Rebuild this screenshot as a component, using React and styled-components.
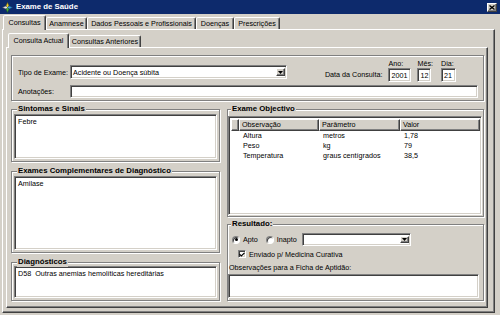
import React from 'react'
import styled, { createGlobalStyle } from 'styled-components'

const FACE = '#d4d0c8'
const SHADOW = '#808080'
const DARK = '#404040'

const GlobalStyle = createGlobalStyle`
  html, body {
    margin: 0;
    padding: 0;
    background: ${FACE};
  }
  body {
    font-family: "Liberation Sans", Arial, sans-serif;
  }
  * {
    box-sizing: border-box;
  }
`

const Window = styled.div`
  width: 500px;
  height: 315px;
  background: ${FACE};
  display: flex;
  flex-direction: column;
  overflow: hidden;
  font-size: 7.2px;
  color: #000;
`
const TitleBar = styled.div`
  height: 14px;
  flex-shrink: 0;
  background: #0d2a6c;
  display: flex;
  align-items: center;
  gap: 3px;
  padding: 0 3px 0 2px;
`
const Caption = styled.span`
  flex: 1;
  color: #fff;
  font-weight: bold;
  font-size: 7.8px;
  line-height: 14px;
`
const CloseBtn = styled.div`
  width: 10px;
  height: 9px;
  background: ${FACE};
  border: 1px solid;
  border-color: #fff ${DARK} ${DARK} #fff;
  box-shadow: inset -1px -1px ${SHADOW};
  display: flex;
  align-items: center;
  justify-content: center;
`
const Body = styled.div`
  flex: 1;
  display: flex;
  flex-direction: column;
  padding: 1px 5px 2px 2px;
  min-height: 0;
`
const TabStrip = styled.div`
  display: flex;
  align-items: flex-end;
  height: 14px;
  flex-shrink: 0;
  padding-left: ${p => p.$pad}px;
  position: relative;
  z-index: 2;
`
const Tab = styled.div`
  width: ${p => p.$w}px;
  height: ${p => (p.$active ? 15 : 12)}px;
  margin-bottom: ${p => (p.$active ? -1 : 0)}px;
  background: ${FACE};
  border: 1px solid;
  border-bottom: none;
  border-color: #fff ${DARK} transparent #fff;
  border-radius: 2px 2px 0 0;
  box-shadow: inset -1px 0 ${SHADOW};
  display: flex;
  align-items: ${p => (p.$active ? 'flex-start' : 'center')};
  padding-top: ${p => (p.$active ? 2 : 0)}px;
  justify-content: center;
  white-space: nowrap;
  font-size: 7.2px;
  line-height: 9px;
`
const Panel = styled.div`
  flex: 1;
  min-height: 0;
  display: flex;
  flex-direction: column;
  border: 1px solid;
  border-color: #fff ${DARK} ${DARK} #fff;
  box-shadow: inset -1px -1px ${SHADOW};
  padding: ${p => p.$pad};
`
const Content = styled.div`
  flex: 1;
  display: flex;
  flex-direction: column;
  gap: 3px;
  padding: 7px 3px 6px 4px;
  min-height: 0;
`
const Frame = styled.div`
  position: relative;
  border: 1px solid ${SHADOW};
  box-shadow: inset 1px 1px #fff, 1px 1px #fff;
  display: flex;
  flex-direction: column;
  height: ${p => (p.$h ? `${p.$h}px` : 'auto')};
  flex: ${p => (p.$h ? 'none' : 1)};
  padding: ${p => p.$pad || '4px 2px 2px 2px'};
`
const GroupWrap = styled.div`
  padding-top: 5px;
  display: flex;
  flex-direction: column;
  flex: ${p => (p.$grow ? 1 : 'none')};
  margin-top: ${p => p.$mt || 0}px;
`
const Legend = styled.span`
  position: absolute;
  top: -6px;
  left: ${p => p.$left || 4}px;
  padding: 0 1px;
  background: ${FACE};
  font-weight: bold;
  font-size: 7.8px;
  line-height: 10px;
  white-space: nowrap;
`
const Columns = styled.div`
  flex: 1;
  display: flex;
  gap: 7px;
  min-height: 0;
`
const Column = styled.div`
  width: ${p => p.$w}px;
  display: flex;
  flex-direction: column;
`
const Sunken = styled.div`
  background: #fff;
  border: 1px solid;
  border-color: ${SHADOW} #fff #fff ${SHADOW};
  box-shadow: inset 1px 1px ${DARK}, inset -1px -1px ${FACE};
`
const TextArea = styled(Sunken)`
  flex: 1;
  padding: 2px 3px;
  line-height: 9px;
  white-space: nowrap;
`
const Input = styled(Sunken)`
  width: ${p => (p.$w ? `${p.$w}px` : 'auto')};
  flex: ${p => (p.$w ? 'none' : 1)};
  height: ${p => p.$h || 14}px;
  padding: 0 2px;
  display: flex;
  align-items: center;
  line-height: 9px;
`
const Combo = styled(Sunken)`
  width: ${p => p.$w}px;
  height: ${p => p.$h}px;
  display: flex;
  align-items: stretch;
  padding: 2px 1px 2px 2px;
`
const ComboText = styled.span`
  flex: 1;
  display: flex;
  align-items: center;
  line-height: 9px;
  white-space: nowrap;
`
const DropBtn = styled.div`
  width: 9px;
  background: ${FACE};
  border: 1px solid;
  border-color: #fff ${DARK} ${DARK} #fff;
  box-shadow: inset -1px -1px ${SHADOW};
  display: flex;
  align-items: center;
  justify-content: center;
`
const TopFields = styled.div`
  display: flex;
  flex-direction: column;
  gap: 3px;
  padding: 3px 5px 2px 6px;
`
const FieldRow = styled.div`
  display: flex;
  align-items: ${p => (p.$end ? 'flex-end' : 'center')};
`
const Label = styled.span`
  width: ${p => (p.$w ? `${p.$w}px` : 'auto')};
  flex-shrink: 0;
  white-space: nowrap;
  line-height: 9px;
  margin-bottom: ${p => p.$mb || 0}px;
  margin-left: ${p => p.$ml || 0};
`
const DateGroup = styled.div`
  display: flex;
  margin-left: 6px;
  margin-right: 22px;
`
const DateField = styled.div`
  display: flex;
  flex-direction: column;
  margin-right: ${p => p.$mr || 0}px;
`
const DateLabel = styled.span`
  line-height: 9px;
  height: 9px;
`
const ListView = styled(Sunken)`
  flex: 1;
  display: flex;
  flex-direction: column;
  padding: 2px 1px 1px 2px;
  overflow: hidden;
`
const Grid = styled.div`
  display: grid;
  grid-template-columns: 8px 80px 81px 1fr;
`
const HeadCell = styled.div`
  height: 12px;
  background: ${FACE};
  border: 1px solid;
  border-color: #fff ${DARK} ${DARK} #fff;
  box-shadow: inset -1px -1px ${SHADOW};
  padding-left: 2px;
  line-height: 10px;
  white-space: nowrap;
`
const Cell = styled.div`
  height: 10px;
  line-height: 10px;
  padding-left: 4px;
  white-space: nowrap;
`
const ResultBox = styled.div`
  flex: 1;
  display: flex;
  flex-direction: column;
`
const OptionRow = styled.div`
  display: flex;
  align-items: center;
  height: ${p => p.$h}px;
  margin-left: ${p => p.$ml}px;
  margin-top: ${p => p.$mt || 0}px;
`
const Radio = styled.span`
  width: 8px;
  height: 8px;
  border-radius: 50%;
  background: #fff;
  border: 1px solid;
  border-color: ${SHADOW} #fff #fff ${SHADOW};
  box-shadow: inset 1px 1px ${DARK};
  display: flex;
  align-items: center;
  justify-content: center;
  margin-right: 3px;
  &::after {
    content: '';
    width: 3px;
    height: 3px;
    border-radius: 50%;
    background: ${p => (p.$on ? '#000' : 'transparent')};
  }
`
const Check = styled(Sunken)`
  width: 8px;
  height: 8px;
  margin-right: 3px;
  display: flex;
  align-items: center;
  justify-content: center;
`
const OptionText = styled.span`
  line-height: 9px;
  margin-right: ${p => p.$mr || 0}px;
  white-space: nowrap;
`
const ObsLabel = styled.span`
  line-height: 9px;
  margin: 4px 0 2px 1px;
  white-space: nowrap;
`

const Arrow = () => (
  <svg width="5" height="3" viewBox="0 0 5 3">
    <path d="M0 0h5L2.5 3z" fill="#000" />
  </svg>
)

const AppIcon = () => (
  <svg width="11" height="11" viewBox="0 0 11 11">
    <path d="M5.5 0.5l1.5 3.5-1.5 1.5-1.5-1.5z" fill="#f3d22a" stroke="#6a5a10" strokeWidth="0.5" />
    <path d="M10.5 5.5l-3.5 1.5-1.5-1.5 1.5-1.5z" fill="#3aa0e0" stroke="#1a4a70" strokeWidth="0.5" />
    <path d="M5.5 10.5l-1.5-3.5 1.5-1.5 1.5 1.5z" fill="#4cb040" stroke="#1f5a1a" strokeWidth="0.5" />
    <path d="M0.5 5.5l3.5-1.5 1.5 1.5-1.5 1.5z" fill="#e8e8e8" stroke="#555" strokeWidth="0.5" />
  </svg>
)

const Group = ({ title, h, grow, mt, pad, left, children }) => (
  <GroupWrap $grow={grow} $mt={mt}>
    <Frame $h={h} $pad={pad}>
      <Legend $left={left}>{title}</Legend>
      {children}
    </Frame>
  </GroupWrap>
)

const rows = [
  ['Altura', 'metros', '1,78'],
  ['Peso', 'kg', '79'],
  ['Temperatura', 'graus centígrados', '38,5'],
]

const App = () => {
  return (
    <Window>
      <GlobalStyle />
      <TitleBar>
        <AppIcon />
        <Caption>Exame de Saúde</Caption>
        <CloseBtn>
          <svg width="6" height="5" viewBox="0 0 6 5">
            <path d="M0.5 0.5l5 4M5.5 0.5l-5 4" stroke="#000" strokeWidth="1.3" />
          </svg>
        </CloseBtn>
      </TitleBar>
      <Body>
        <TabStrip $pad={1}>
          <Tab $w={43} $active>Consultas</Tab>
          <Tab $w={41}>Anamnese</Tab>
          <Tab $w={109}>Dados Pessoais e Profissionais</Tab>
          <Tab $w={38}>Doenças</Tab>
          <Tab $w={46}>Prescrições</Tab>
        </TabStrip>
        <Panel $pad="3px 6px 4px 3px">
          <TabStrip $pad={2}>
            <Tab $w={61} $active>Consulta Actual</Tab>
            <Tab $w={72}>Consultas Anteriores</Tab>
          </TabStrip>
          <Panel $pad="0">
            <Content>
              <Frame $h={46} $pad="0">
                <TopFields>
                  <FieldRow $end>
                    <Label $w={52} $mb={5}>Tipo de Exame:</Label>
                    <Combo $w={217} $h={14} style={{ marginBottom: 3 }}>
                      <ComboText>Acidente ou Doença súbita</ComboText>
                      <DropBtn><Arrow /></DropBtn>
                    </Combo>
                    <Label $mb={3} $ml="auto">Data da Consulta:</Label>
                    <DateGroup>
                      <DateField $mr={6}>
                        <DateLabel>Ano:</DateLabel>
                        <Input $w={23}>2001</Input>
                      </DateField>
                      <DateField $mr={8}>
                        <DateLabel>Mês:</DateLabel>
                        <Input $w={14}>12</Input>
                      </DateField>
                      <DateField>
                        <DateLabel>Dia:</DateLabel>
                        <Input $w={15}>21</Input>
                      </DateField>
                    </DateGroup>
                  </FieldRow>
                  <FieldRow>
                    <Label $w={52}>Anotações:</Label>
                    <Input $h={13} />
                  </FieldRow>
                </TopFields>
              </Frame>
              <Columns>
                <Column $w={209}>
                  <Group title="Sintomas e Sinais" h={53} left={5}>
                    <TextArea>Febre</TextArea>
                  </Group>
                  <Group title="Exames Complementares de Diagnóstico" h={82} mt={4} left={5}>
                    <TextArea>Amilase</TextArea>
                  </Group>
                  <Group title="Diagnósticos" grow mt={4} left={5} pad="3px 2px 2px 2px">
                    <TextArea>D58&nbsp;&nbsp;Outras anemias hemolíticas hereditárias</TextArea>
                  </Group>
                </Column>
                <Column $w={257}>
                  <Group title="Exame Objectivo" h={108} left={3} pad="6px 1px 1px 0">
                    <ListView>
                      <Grid>
                        <HeadCell />
                        <HeadCell>Observação</HeadCell>
                        <HeadCell>Parâmetro</HeadCell>
                        <HeadCell>Valor</HeadCell>
                        {rows.map(r => (
                          <React.Fragment key={r[0]}>
                            <Cell />
                            <Cell>{r[0]}</Cell>
                            <Cell>{r[1]}</Cell>
                            <Cell>{r[2]}</Cell>
                          </React.Fragment>
                        ))}
                      </Grid>
                    </ListView>
                  </Group>
                  <Group title="Resultado:" grow mt={2} left={3} pad="8px 4px 2px 0">
                    <ResultBox>
                      <OptionRow $h={13} $ml={4}>
                        <Radio $on />
                        <OptionText $mr={8}>Apto</OptionText>
                        <Radio />
                        <OptionText $mr={5}>Inapto</OptionText>
                        <Combo $w={109} $h={13}>
                          <ComboText />
                          <DropBtn><Arrow /></DropBtn>
                        </Combo>
                      </OptionRow>
                      <OptionRow $h={10} $ml={10} $mt={3}>
                        <Check>
                          <svg width="6" height="5" viewBox="0 0 6 5">
                            <path d="M0.5 2.2l1.8 1.8L5.5 0.8" stroke="#000" strokeWidth="1.2" fill="none" />
                          </svg>
                        </Check>
                        <OptionText>Enviado p/ Medicina Curativa</OptionText>
                      </OptionRow>
                      <ObsLabel>Observações para a Ficha de Aptidão:</ObsLabel>
                      <TextArea />
                    </ResultBox>
                  </Group>
                </Column>
              </Columns>
            </Content>
          </Panel>
        </Panel>
      </Body>
    </Window>
  )
}

export default App
